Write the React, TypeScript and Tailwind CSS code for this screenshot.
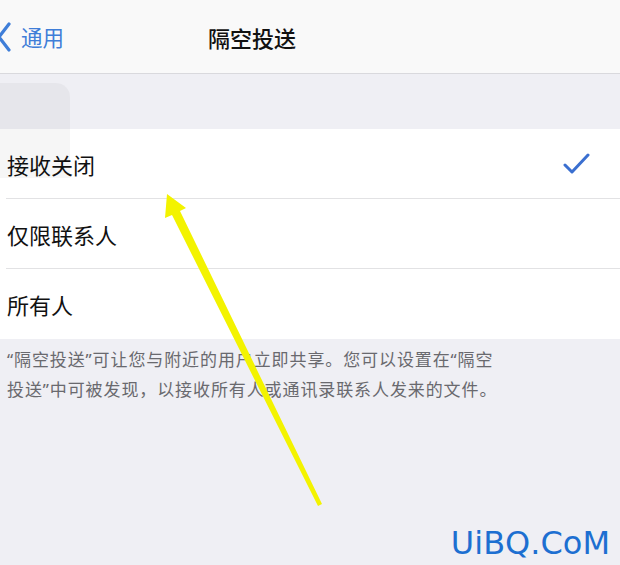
const CJK = "font-['Noto_Sans_CJK_SC','Noto_Sans',sans-serif]";

const OPTIONS = [
  { label: "接收关闭", checked: true },
  { label: "仅限联系人" },
  { label: "所有人", last: true },
];

function Chevron() {
  return (
    <svg width="14" height="30" viewBox="0 0 14 30" className="-ml-[3px] shrink-0">
      <path d="M12 2 L2 15 L12 28" fill="none" stroke="#3f7ed8" strokeWidth="3.2" strokeLinecap="round" strokeLinejoin="round" />
    </svg>
  );
}

function Check() {
  return (
    <svg width="28" height="24" viewBox="0 0 28 24">
      <path d="M2 13 L9 20 L25 3" fill="none" stroke="#3a6fd0" strokeWidth="3" strokeLinecap="round" strokeLinejoin="round" />
    </svg>
  );
}

function Arrow() {
  return (
    <svg className="absolute left-0 top-0 pointer-events-none" width="620" height="565">
      <polygon points="167,194 165,218 172,215 318,506 322,504 180,211 186,208" fill="#f3f300" />
    </svg>
  );
}

export default function App() {
  return (
    <div className={`relative w-[620px] h-[565px] overflow-hidden bg-[#efeff4] ${CJK}`}>
      {/* nav bar */}
      <header className="h-[74px] flex items-center bg-[#f9f9f9] border-b border-[#d9d9dd]">
        <div className="flex items-center gap-[10px]">
          <Chevron />
          <span className="text-[21.5px] leading-none text-[#3f7ed8]">通用</span>
        </div>
        <h1 className="ml-[144px] text-[22px] font-medium leading-none text-[#111]">隔空投送</h1>
      </header>

      <div className="h-[55px]" />

      {/* options */}
      <div className="bg-white">
        {OPTIONS.map((o) => (
          <div key={o.label} className="h-[70px] pl-[6px]">
            <div className={`h-full flex items-center justify-between pl-[1px] pr-[29px] ${o.last ? "" : "border-b border-[#e2e2e4]"}`}>
              <span className="text-[22px] leading-none text-[#111]">{o.label}</span>
              {o.checked && <Check />}
            </div>
          </div>
        ))}
      </div>

      <p className="pt-[6px] pl-[7px] text-[17px] leading-[30px] tracking-[0.9px] text-[#69696e] font-['Noto_Sans','Noto_Sans_CJK_SC',sans-serif]">
        “隔空投送”可让您与附近的用户立即共享。您可以设置在“隔空
        <br />
        投送”中可被发现，以接收所有人或通讯录联系人发来的文件。
      </p>

      {/* tap highlight */}
      <div className="absolute left-0 top-[83px] w-[70px] h-[95px] rounded-tr-[14px] bg-black/[0.035]" />

      <Arrow />

      <div className="absolute right-[10px] bottom-[6px] text-[32px] leading-none text-[#1d6fd1] font-['DejaVu_Sans',sans-serif]">
        UiBQ.CoM
      </div>
    </div>
  );
}
